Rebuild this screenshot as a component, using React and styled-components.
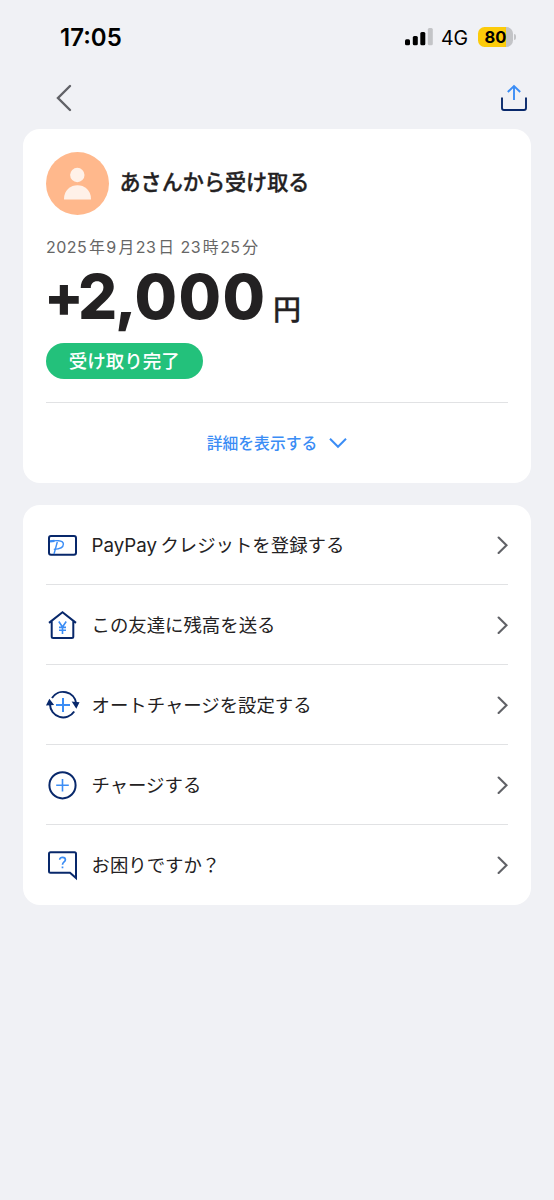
import React from "react";
import styled, { createGlobalStyle } from "styled-components";

const NAVY = "#08286b";
const BLUE = "#3b8df5";

const menuItems = [
  { icon: "card", latin: "PayPay", label: "クレジットを登録する" },
  { icon: "send", label: "この友達に残高を送る" },
  { icon: "auto", label: "オートチャージを設定する" },
  { icon: "charge", label: "チャージする" },
  { icon: "help", label: "お困りですか？" },
];

const dateParts = ["2025", "年", "9", "月", "23", "日", " 23", "時", "25", "分"];

const MenuIcon = ({ name }) => (
  <IconSvg width="32" height="32" viewBox="0 0 32 32">
    {name === "card" && (
      <>
        <rect x="3" y="7" width="27" height="18.7" rx="2" />
        <g stroke={BLUE} strokeWidth="1.4">
          <path d="M4 12.4C9 11.2 17.4 10.9 17.4 15C17.4 18.3 13 20.2 7.8 20.4" />
          <path d="M11.3 13L8 25" />
          <path d="M4 12.4L8.5 11.9" strokeWidth="2.2" />
        </g>
      </>
    )}
    {name === "send" && (
      <>
        <path d="M3 13.9L16.5 3.3L30 13.9M5.7 12.5V27.5Q5.7 29 7.2 29H25.8Q27.3 29 27.3 27.5V12.5" />
        <path
          d="M12.8 12.5L16.5 18L20.2 12.5M16.5 18V25M13 18.4H20M13 21.3H20"
          stroke={BLUE}
          strokeWidth="1.6"
        />
      </>
    )}
    {name === "auto" && (
      <>
        <path d="M6 9A13.2 13.2 0 0 1 30.2 14.5M28.2 22.5A13.2 13.2 0 0 1 4 15.5" />
        <path d="M27.6 13.7L32 14.1L30.2 17.8ZM1.6 15.4L3.5 11.6L6.2 15.2Z" fill={NAVY} />
        <path d="M17 9V23M10 16H24" stroke={BLUE} />
      </>
    )}
    {name === "charge" && (
      <>
        <circle cx="16.5" cy="16.3" r="13.1" />
        <path d="M16.5 10V22.6M10.2 16.3H22.8" stroke={BLUE} strokeWidth="1.6" />
      </>
    )}
    {name === "help" && (
      <>
        <path d="M4.5 3.2H28.5Q30 3.2 30 4.7V29L24 23.7H4.5Q3 23.7 3 22.2V4.7Q3 3.2 4.5 3.2Z" />
        <path
          d="M13.7 10.8C13.7 7.4 19.4 7.5 19.4 10.8C19.4 13 16.5 13 16.5 15.7M16.5 17.4V19.2"
          stroke={BLUE}
          strokeWidth="1.7"
        />
      </>
    )}
  </IconSvg>
);

const StatusBar = () => (
  <Status>
    <Clock>17:05</Clock>
    <Signals>
      <svg width="29" height="20" viewBox="0 0 29 20">
        <rect x="0" y="12.3" width="5" height="6" rx="1.5" />
        <rect x="7.8" y="9" width="5" height="9.3" rx="1.5" />
        <rect x="15.3" y="5" width="5" height="13.3" rx="1.5" />
        <rect x="22.8" y="1" width="5" height="17.3" rx="1.5" fill="#c3c4c7" />
      </svg>
      <Network>4G</Network>
      <Battery>80</Battery>
      <BatteryCap />
    </Signals>
  </Status>
);

const App = () => (
  <Page>
    <GlobalStyle />
    <StatusBar />
    <NavBar>
      <svg width="16" height="28" viewBox="0 0 16 28" fill="none">
        <path d="M14 2L2 14L14 26" stroke="#616267" strokeWidth="2.4" strokeLinecap="round" />
      </svg>
      <svg width="28" height="28" viewBox="0 0 28 28" fill="none" strokeWidth="1.9">
        <path d="M2 13.5V24Q2 26 4 26H24Q26 26 26 24V13.5" stroke={NAVY} />
        <path d="M14 16V2M7.8 8L14 2L20.2 8" stroke={BLUE} />
      </svg>
    </NavBar>

    <Card>
      <Sender>
        <Avatar viewBox="0 0 63 63">
          <circle cx="31.5" cy="31.5" r="31.5" fill="#ffb88c" />
          <circle cx="31.3" cy="23" r="7.2" fill="#fff1e8" />
          <path d="M18 47C18 28.6 45 28.6 45 47Q45 47.5 44.4 47.5H18.6Q18 47.5 18 47Z" fill="#fff1e8" />
        </Avatar>
        <Title>あさんから受け取る</Title>
      </Sender>
      <DateLine>
        {dateParts.map((part, i) => (i % 2 ? <Kanji key={i}>{part}</Kanji> : part))}
      </DateLine>
      <Amount>
        <Sign>+</Sign>
        <Digits>
          <Tight>2,</Tight>000
        </Digits>
        <Yen>円</Yen>
      </Amount>
      <Badge>受け取り完了</Badge>
      <Details>
        詳細を表示する
        <svg width="20" height="12" viewBox="0 0 20 12" fill="none">
          <path d="M2 1.8L10 9.8L18 1.8" stroke={BLUE} strokeWidth="2" />
        </svg>
      </Details>
    </Card>

    <Menu>
      {menuItems.map(({ icon, latin, label }) => (
        <MenuRow key={icon}>
          <MenuIcon name={icon} />
          <MenuLabel>
            {latin && <Latin>{latin}</Latin>}
            {label}
          </MenuLabel>
          <svg width="12" height="18" viewBox="0 0 12 18" fill="none">
            <path d="M2.6 1.5L10.5 9.2L2.6 17" stroke="#616267" strokeWidth="2.1" strokeLinecap="round" />
          </svg>
        </MenuRow>
      ))}
    </Menu>
  </Page>
);

const GlobalStyle = createGlobalStyle`
  * {
    box-sizing: border-box;
  }

  body {
    margin: 0;
    background: #f0f1f5;
    color: #232122;
    font-family: Inter, "Noto Sans CJK JP", sans-serif;
  }

  svg {
    display: block;
    flex-shrink: 0;
  }
`;

const Page = styled.div`
  width: 554px;
  min-height: 1200px;
  background: #f0f1f5;
`;

const Status = styled.div`
  display: flex;
  justify-content: space-between;
  align-items: center;
  height: 74px;
  padding: 0 38px 0 60px;
  color: #000;
`;

const Clock = styled.div`
  font-size: 24px;
  font-weight: 600;
`;

const Signals = styled.div`
  display: flex;
  align-items: center;
`;

const Network = styled.div`
  margin-left: 7px;
  width: 37px;
  padding-top: 1px;
  font-size: 19.5px;
`;

const Battery = styled.div`
  width: 35px;
  height: 20px;
  border-radius: 6.5px;
  background: linear-gradient(to right, #fccb0a 80%, #c3c4c7 80%);
  font-size: 16.5px;
  font-weight: 700;
  line-height: 20px;
  text-align: center;
`;

const BatteryCap = styled.div`
  width: 2px;
  height: 6px;
  margin-left: 1px;
  border-radius: 0 2px 2px 0;
  background: #c3c4c7;
`;

const NavBar = styled.div`
  display: flex;
  justify-content: space-between;
  align-items: flex-start;
  height: 55px;
  padding: 10px 26px 0 56px;
`;

const Card = styled.section`
  height: 353.5px;
  margin: 0 23px 22.5px;
  padding: 23px 23px 0 22.5px;
  border-radius: 17px;
  background: #fff;
`;

const Sender = styled.div`
  display: flex;
  align-items: center;
  gap: 11px;
`;

const Avatar = styled.svg`
  width: 63px;
  height: 63px;
`;

const Title = styled.h1`
  margin: 0 0 1px;
  font-size: 21.1px;
  font-weight: 500;
  line-height: 30px;
  -webkit-text-stroke: 0.35px;
`;

const DateLine = styled.div`
  height: 24px;
  margin-top: 20px;
  padding-left: 0.5px;
  color: #666;
  font-size: 16px;
  line-height: 24px;
  letter-spacing: 0.45px;
  white-space: pre;
`;

const Kanji = styled.span`
  margin: 0 1.1px 0 1.8px;
  font-size: 15.8px;
`;

const Amount = styled.div`
  display: flex;
  align-items: baseline;
  height: 76px;
  line-height: 76px;
  font-weight: 800;
`;

const Sign = styled.span`
  margin-left: -1.5px;
  width: 34px;
  font-size: 58px;
  letter-spacing: -6px;
  transform: translateY(-2px);
`;

const Digits = styled.span`
  width: 195px;
  font-size: 61.5px;
  letter-spacing: 1.4px;
`;

const Tight = styled.span`
  letter-spacing: -2.2px;
`;

const Yen = styled.span`
  font-size: 28px;
  font-weight: 500;
  -webkit-text-stroke: 0.35px;
  transform: translateY(1px);
`;

const Badge = styled.div`
  width: 157.5px;
  height: 35.5px;
  margin-top: 8px;
  border-radius: 18px;
  background: #23c17b;
  color: #fff;
  font-size: 18.5px;
  font-weight: 500;
  line-height: 36px;
  text-align: center;
`;

const Details = styled.div`
  display: flex;
  justify-content: center;
  align-items: center;
  gap: 11px;
  height: 80px;
  margin-top: 23.5px;
  padding-left: 1.5px;
  border-top: 1px solid #e1e2e4;
  color: ${BLUE};
  font-size: 15.8px;
  font-weight: 500;
`;

const Menu = styled.ul`
  height: 400px;
  margin: 0 23px;
  padding: 0 23px;
  border-radius: 17px;
  background: #fff;
  list-style: none;
`;

const MenuRow = styled.li`
  display: flex;
  align-items: center;
  height: 80px;
  border-bottom: 1px solid #e1e2e4;

  &:last-child {
    border-bottom-color: transparent;
  }
`;

const IconSvg = styled.svg`
  overflow: visible;
  fill: none;
  stroke: ${NAVY};
  stroke-width: 2;
`;

const MenuLabel = styled.span`
  flex: 1;
  margin-left: 13.5px;
  padding-bottom: 1px;
  font-size: 18.4px;
`;

const Latin = styled.span`
  margin-right: 3.5px;
  font-size: 18.7px;
`;

export default App;
